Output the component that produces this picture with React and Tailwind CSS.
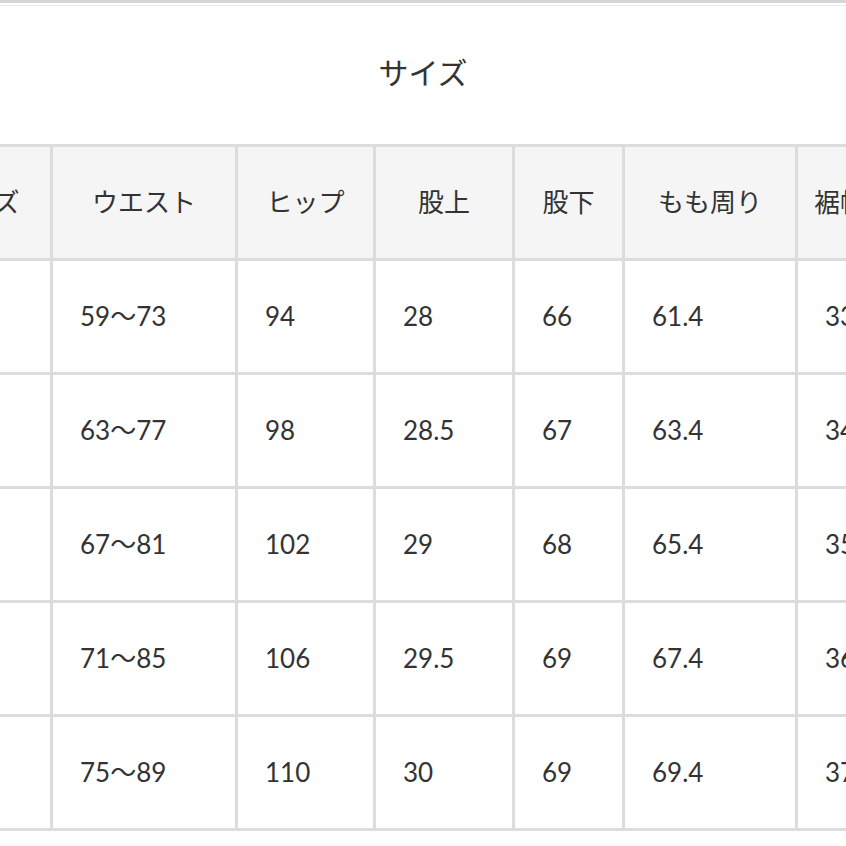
import React from "react";

const headers = ["サイズ", "ウエスト", "ヒップ", "股上", "股下", "もも周り", "裾幅"];

const rows = [
  ["S", "59〜73", "94", "28", "66", "61.4", "33"],
  ["M", "63〜77", "98", "28.5", "67", "63.4", "34"],
  ["L", "67〜81", "102", "29", "68", "65.4", "35"],
  ["LL", "71〜85", "106", "29.5", "69", "67.4", "36"],
  ["3L", "75〜89", "110", "30", "69", "69.4", "37"],
];

export default function App() {
  return (
    <div
      className="w-[846px] h-[846px] overflow-hidden bg-white text-[#333]"
      style={{ fontFamily: 'Lato, "Noto Sans CJK JP", sans-serif' }}
    >
      <div className="h-[3px] bg-[#d6d6d6]" />
      <div className="h-[2px]" />
      <div className="h-px bg-[#ededed]" />

      <div className="h-[138px] flex items-center justify-center pb-[6px]">
        <h2 className="text-[30px] font-normal">サイズ</h2>
      </div>

      <div className="grid grid-cols-[138px_182px_135px_136px_107px_170px_84px] auto-rows-[111px] gap-[3px] bg-[#dcdcdc] p-[3px] -ml-[91px] w-max">
        {headers.map((h) => (
          <div key={h} className="bg-[#f5f5f5] flex items-center justify-center text-[26px] whitespace-nowrap">
            {h}
          </div>
        ))}
        {rows.map((r, i) =>
          r.map((c, j) => (
            <div key={i + "-" + j} className="bg-white flex items-center pl-[27px] text-[26px] whitespace-nowrap">
              {c}
            </div>
          ))
        )}
      </div>
    </div>
  );
}
